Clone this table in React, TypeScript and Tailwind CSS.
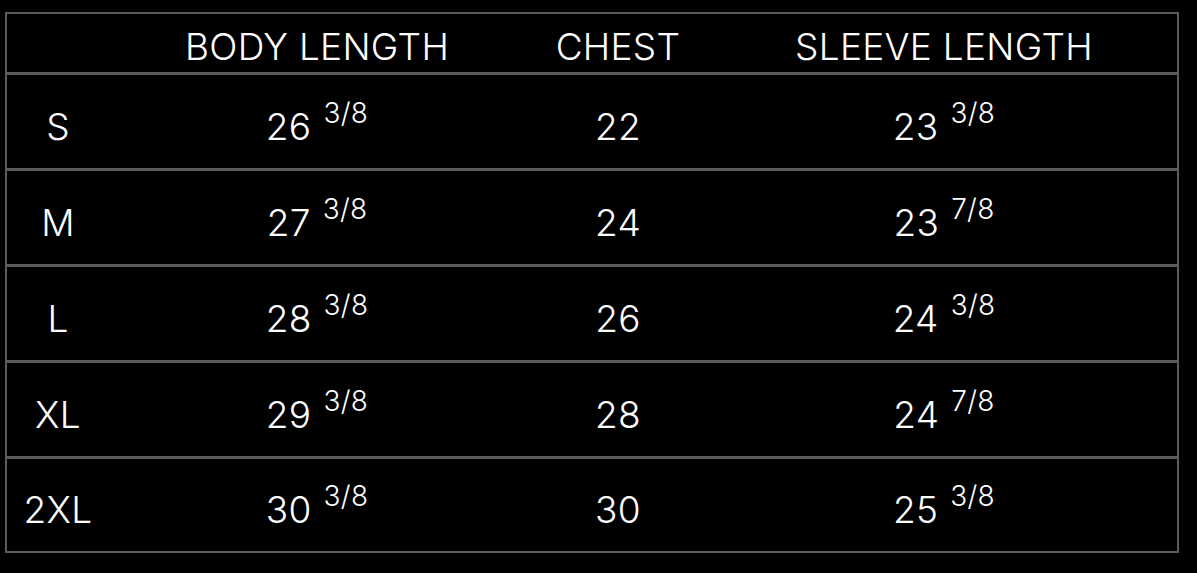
const rows = [
  { size: "S", body: "26", bodyFrac: "3/8", chest: "22", sleeve: "23", sleeveFrac: "3/8" },
  { size: "M", body: "27", bodyFrac: "3/8", chest: "24", sleeve: "23", sleeveFrac: "7/8" },
  { size: "L", body: "28", bodyFrac: "3/8", chest: "26", sleeve: "24", sleeveFrac: "3/8" },
  { size: "XL", body: "29", bodyFrac: "3/8", chest: "28", sleeve: "24", sleeveFrac: "7/8" },
  { size: "2XL", body: "30", bodyFrac: "3/8", chest: "30", sleeve: "25", sleeveFrac: "3/8" },
];

const cols = "grid grid-cols-[102px_416px_186px_466px]";

const Value = ({ whole, frac }: { whole: string; frac?: string }) => (
  <span className="whitespace-nowrap">
    {whole}
    {frac && <sup className="ml-[12px] text-[28px] top-[-0.6em]">{frac}</sup>}
  </span>
);

const App = () => {
  return (
    <div
      className="min-h-screen w-[1197px] h-[573px] bg-black pt-[12px] pl-[5px] text-white"
      style={{ fontFamily: 'Inter, "Open Sans", sans-serif' }}
    >
      <div className="w-[1174px] border-2 border-[#585c5e] text-[37px] font-light leading-none tracking-[0.3px]">
        {/* header */}
        <div className={`${cols} h-[61px] border-b-[3px] border-[#585c5e] items-center pt-[6px]`}>
          <div />
          <div className="text-center">BODY LENGTH</div>
          <div className="text-center">CHEST</div>
          <div className="text-center">SLEEVE LENGTH</div>
        </div>

        {rows.map((r, i) => (
          <div
            key={r.size}
            className={`${cols} items-center pt-[9px] ${
              i < rows.length - 1 ? "h-[96px] border-b-[3px] border-[#585c5e]" : "h-[92px]"
            }`}
          >
            <div className="text-center">{r.size}</div>
            <div className="text-center">
              <Value whole={r.body} frac={r.bodyFrac} />
            </div>
            <div className="text-center">
              <Value whole={r.chest} />
            </div>
            <div className="text-center">
              <Value whole={r.sleeve} frac={r.sleeveFrac} />
            </div>
          </div>
        ))}
      </div>
    </div>
  );
};

export default App;
